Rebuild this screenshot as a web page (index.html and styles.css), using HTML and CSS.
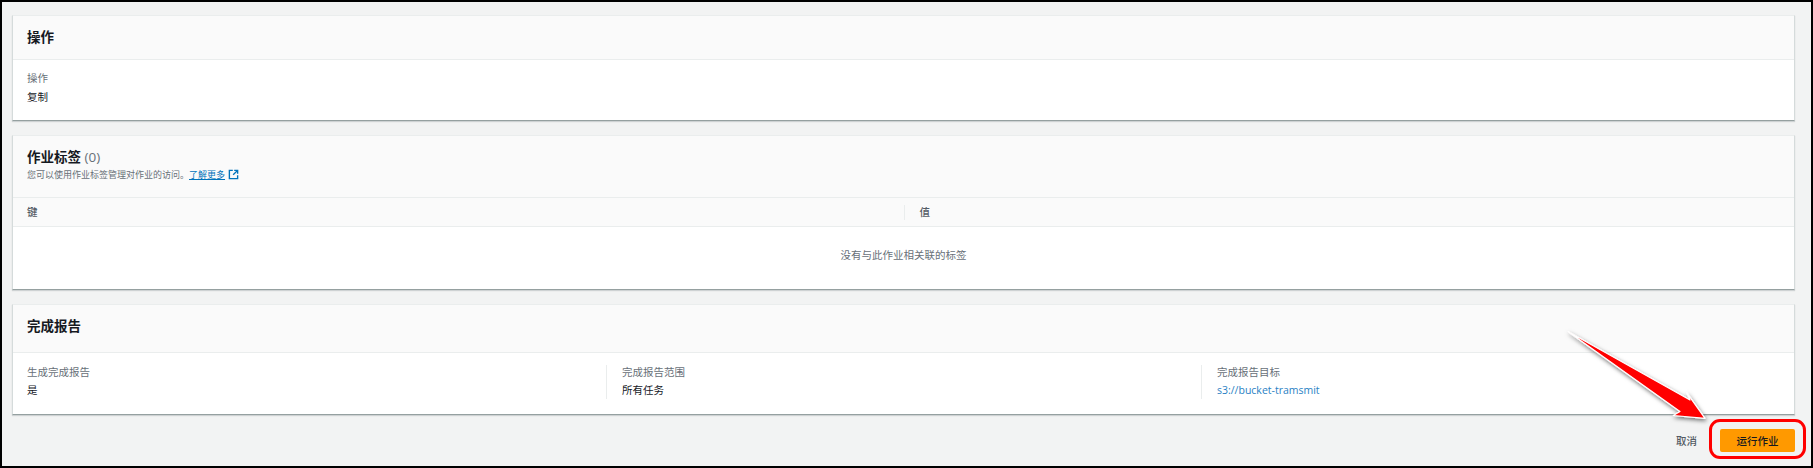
FILE: index.html
```html
<!DOCTYPE html>
<html lang="zh-CN">
<head>
<meta charset="utf-8">
<title>运行作业</title>
<link rel="stylesheet" href="styles.css">
</head>
<body>
<div class="frame">
  <section class="card">
    <header class="card-head"><h2>操作</h2></header>
    <div class="card-body one">
      <div class="label">操作</div>
      <div class="value">复制</div>
    </div>
  </section>
  <section class="card">
    <header class="card-head tags-head">
      <h2>作业标签 <span class="count">(0)</span></h2>
      <p class="desc">您可以使用作业标签管理对作业的访问。<a class="link" href="#">了解更多</a><svg class="ext" viewBox="0 0 16 16" width="11" height="11"><path d="M7 2H2v12h12V9" fill="none" stroke="currentColor" stroke-width="2"/><path d="M9 2h5v5M14 2L7.5 8.5" fill="none" stroke="currentColor" stroke-width="2"/></svg></p>
    </header>
    <div class="thead">
      <div class="th">键</div>
      <div class="th sep">值</div>
    </div>
    <div class="empty">没有与此作业相关联的标签</div>
  </section>
  <section class="card">
    <header class="card-head report-head"><h2>完成报告</h2></header>
    <div class="card-body cols">
      <div class="col"><div class="label">生成完成报告</div><div class="value">是</div></div>
      <div class="col"><div class="label">完成报告范围</div><div class="value">所有任务</div></div>
      <div class="col"><div class="label">完成报告目标</div><div class="value"><a class="s3" href="#">s3://bucket-tramsmit</a></div></div>
    </div>
  </section>
  <div class="actions">
    <a class="cancel" href="#">取消</a>
    <button class="run" type="button">运行作业</button>
  </div>
  <div class="ring"></div>
  <svg class="arrow" viewBox="0 0 150 100" width="150" height="100">
    <defs><filter id="sh" x="-20%" y="-20%" width="140%" height="140%"><feDropShadow dx="1" dy="2" stdDeviation="2" flood-color="#000" flood-opacity=".55"/></filter></defs>
    <path d="M2.3 1.7 L124 70 L120.7 62.7 L139 88.3 L107.3 85.5 L114 81.5 Z" fill="#f00" stroke="#fff" stroke-width="1.2" stroke-linejoin="round" filter="url(#sh)"/>
  </svg>
</div>
</body>
</html>
```
FILE: styles.css
```css
* { box-sizing: border-box; }
html, body { margin: 0; padding: 0; }
body {
  width: 1813px;
  height: 468px;
  overflow: hidden;
  font-family: "Open Sans", "Noto Sans CJK SC", sans-serif;
  color: #16191f;
}
.frame {
  position: relative;
  width: 1813px;
  height: 468px;
  border: 2px solid #000;
  background: #f2f3f3;
  padding: 13px 16px 0 10px;
  display: flex;
  flex-direction: column;
  gap: 14px;
}
.card {
  background: #fff;
  border-top: 1px solid #eaeded;
  border-left: 1px solid #d5dbdb;
  border-right: 1px solid #d5dbdb;
  border-bottom: 1px solid #95a0a0;
  box-shadow: 0 1px 1px rgba(0, 28, 36, .15);
}
.card-head {
  background: #fafafa;
  border-bottom: 1px solid #eaeded;
  height: 44px;
  padding: 11px 14px 0;
}
.report-head { height: 48px; padding-top: 11px; }
h2 {
  margin: 0;
  font-size: 13.5px;
  line-height: 21px;
  font-weight: 700;
  color: #16191f;
}
.count { font-weight: 400; color: #687078; }
.tags-head { height: 62px; padding-top: 11px; }
.desc {
  margin: 0;
  font-size: 9px;
  line-height: 14px;
  color: #687078;
}
.link { color: #0073bb; }
.ext { margin-left: 3px; vertical-align: -2px; color: #0073bb; }
.card-body { padding: 11px 14px 0; }
.one { height: 60px; }
.label { font-size: 10.5px; line-height: 14px; color: #687078; }
.value { font-size: 10.5px; line-height: 14px; margin-top: 4px; color: #16191f; }
.one .value { margin-top: 5px; }
.thead {
  display: grid;
  grid-template-columns: 50% 50%;
  height: 29px;
  background: #fafafa;
  border-bottom: 1px solid #eaeded;
  align-items: center;
}
.th { font-size: 10.5px; line-height: 15px; padding-left: 14px; color: #545b64; font-weight: 500; }
.sep { border-left: 1px solid #eaeded; height: 15px; padding-left: 15px; }
.empty {
  height: 62px;
  padding-top: 19px;
  text-align: center;
  font-size: 10.5px;
  line-height: 18px;
  color: #687078;
}
.cols {
  display: grid;
  grid-template-columns: 593px 595px 1fr;
  height: 61px;
  padding: 12px 0 0 0;
}
.col { height: 34px; padding-left: 14px; }
.col + .col { border-left: 1px solid #eaeded; padding-left: 15px; }
.s3 { color: #2a7fc4; text-decoration: none; }
.actions {
  display: flex;
  justify-content: flex-end;
  align-items: center;
  gap: 23px;
}
.cancel { font-size: 10.5px; font-weight: 500; color: #545b64; text-decoration: none; }
.run {
  width: 75px;
  height: 23px;
  background: #ff9900;
  border: 0;
  border-radius: 2px;
  font: 500 10.5px "Open Sans", "Noto Sans CJK SC", sans-serif;
  color: #16191f;
  padding: 0;
}
.ring {
  position: absolute;
  left: 1707px;
  top: 417px;
  width: 97px;
  height: 40px;
  border: 3px solid #f00;
  border-radius: 11px;
}
.arrow {
  position: absolute;
  left: 1564px;
  top: 328px;
  overflow: visible;
}
```
